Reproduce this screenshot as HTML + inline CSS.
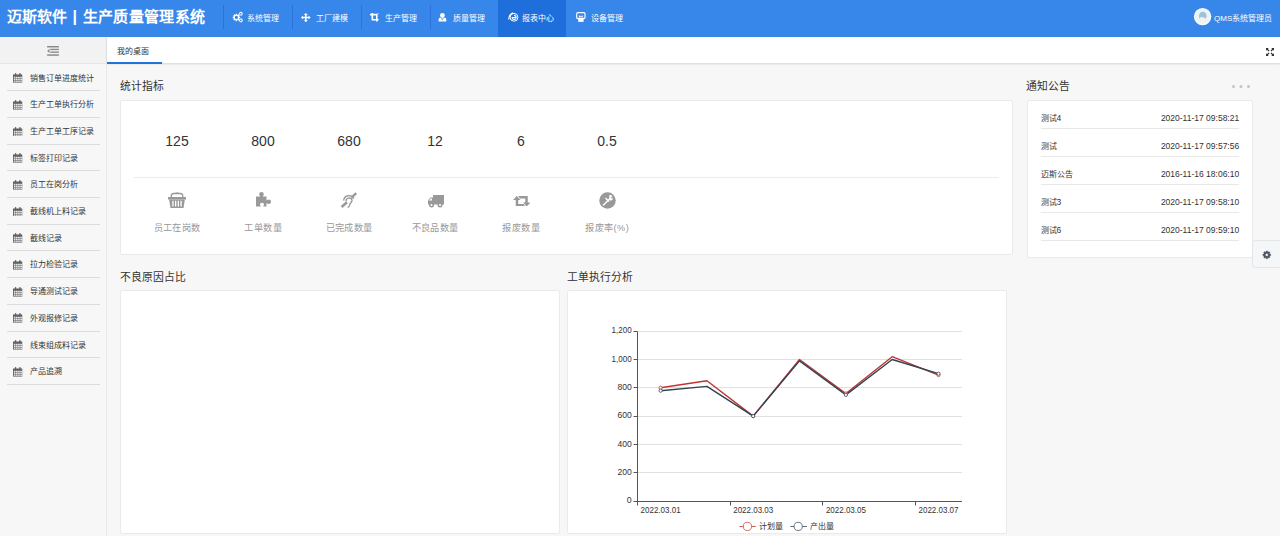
<!DOCTYPE html>
<html lang="zh-CN">
<head>
<meta charset="utf-8">
<style>
*{margin:0;padding:0;box-sizing:border-box}
html,body{width:1280px;height:536px;overflow:hidden;background:#f7f7f7;font-family:"Liberation Sans",sans-serif;color:#333}
.abs{position:absolute}
#hd{position:absolute;left:0;top:0;width:1280px;height:36.67px;background:#3786e9}
#logo{position:absolute;left:7px;top:6px;font-size:15px;font-weight:bold;color:#fff;line-height:22px;white-space:nowrap}
.sep{position:absolute;top:5.2px;width:1px;height:24.2px;background:#2a73dc}
.nav{position:absolute;top:0;height:37px;color:#fff;font-size:8px;line-height:37px;white-space:nowrap}
#act{position:absolute;left:498px;top:0;width:68px;height:37px;background:#1e6fdb}
#user{position:absolute;left:1194px;top:8px;width:17px;height:17px;border-radius:50%;background:#eef4fb}
#uname{position:absolute;left:1214px;top:-0.5px;line-height:37px;font-size:8px;color:#fff;white-space:nowrap}
#side{position:absolute;left:0;top:36.67px;width:106.67px;height:500px;background:#f7f7f7;border-right:1px solid #e8e8e8}
#tog{position:absolute;left:0;top:0;width:105.67px;height:27.3px;background:#f2f2f2;border-bottom:1px solid #e6e6e6}
.mi{position:absolute;left:7px;width:93px;height:26.67px;border-bottom:1px solid #dcdcdc}
.mi span{position:absolute;left:23px;top:1px;line-height:26px;font-size:8px;color:#333;white-space:nowrap}
.mi svg{position:absolute;left:6px;top:8.6px}
#tabs{position:absolute;left:106.67px;top:36.67px;width:1173.33px;height:26.4px;background:#fff;box-shadow:0 1px 2px rgba(0,0,0,.14)}
#tab1{position:absolute;left:0;top:0;width:55.3px;height:27px;border-bottom:2px solid #2272de}
#tab1 span{position:absolute;left:10px;top:2px;line-height:26px;font-size:8px;color:#333}
.ttl{position:absolute;font-size:10.8px;color:#333;white-space:nowrap;line-height:14px}
.card{position:absolute;background:#fff;border:1px solid #eaeaea;border-radius:2px}
.num{position:absolute;top:132.7px;width:86px;text-align:center;font-size:14px;color:#333;line-height:16px}
.lbl{position:absolute;top:221.8px;width:86px;text-align:center;font-size:9.2px;letter-spacing:0.45px;text-indent:0.45px;color:#999;line-height:13px;white-space:nowrap}
.ico{position:absolute}
.nrow{position:absolute;left:1040.6px;width:198.6px;height:28px;border-bottom:1px solid #e8e8e8;font-size:8.5px;color:#333}
.nrow .a{position:absolute;left:0;top:5px;line-height:25px;font-size:8px}
.nrow .b{position:absolute;right:0;top:5px;line-height:25px}
</style>
</head>
<body>
<svg width="0" height="0" style="position:absolute">
<defs>
<symbol id="cal" viewBox="0 0 10 10"><path d="M0 1.5h10V10H0z" fill="#5f5f5f"/><g fill="#ececec"><rect x="0.9" y="3.8" width="1.75" height="1.7"/><rect x="3.15" y="3.8" width="1.75" height="1.7"/><rect x="5.4" y="3.8" width="1.75" height="1.7"/><rect x="7.65" y="3.8" width="1.75" height="1.7"/><rect x="0.9" y="5.95" width="1.75" height="1.7"/><rect x="3.15" y="5.95" width="1.75" height="1.7"/><rect x="5.4" y="5.95" width="1.75" height="1.7"/><rect x="7.65" y="5.95" width="1.75" height="1.7"/><rect x="0.9" y="8.1" width="1.75" height="1.1"/><rect x="3.15" y="8.1" width="1.75" height="1.1"/><rect x="5.4" y="8.1" width="1.75" height="1.1"/><rect x="7.65" y="8.1" width="1.75" height="1.1"/></g><g fill="#5f5f5f"><rect x="2" y="0" width="1.4" height="2.8"/><rect x="6.6" y="0" width="1.4" height="2.8"/></g></symbol>
</defs></svg>
<div id="hd">
  <div id="logo"><span style="position:absolute;left:0;top:0">迈斯软件</span><span style="position:absolute;left:65.5px;top:0;font-size:16px">|</span><span style="position:absolute;left:75.5px;top:0;letter-spacing:0.4px">生产质量管理系统</span></div>
  <div class="sep" style="left:223px"></div>
  <div class="sep" style="left:292px"></div>
  <div class="sep" style="left:361px"></div>
  <div class="sep" style="left:430px"></div>
  <div id="act"></div>
  <svg class="abs" style="left:228px;top:8px" width="20" height="20" viewBox="228 8 20 20"><path fill="#fff" fill-rule="evenodd" d="M239.08 16.60 L240.13 16.66 L240.13 18.14 L239.08 18.20 L238.86 18.73 L239.56 19.51 L238.51 20.56 L237.73 19.86 L237.20 20.08 L237.14 21.13 L235.66 21.13 L235.60 20.08 L235.07 19.86 L234.29 20.56 L233.24 19.51 L233.94 18.73 L233.72 18.20 L232.67 18.14 L232.67 16.66 L233.72 16.60 L233.94 16.07 L233.24 15.29 L234.29 14.24 L235.07 14.94 L235.60 14.72 L235.66 13.67 L237.14 13.67 L237.20 14.72 L237.73 14.94 L238.51 14.24 L239.56 15.29 L238.86 16.07Z M238.00 17.40 A1.6 1.6 0 1 0 234.80 17.40 A1.6 1.6 0 1 0 238.00 17.40Z M242.29 13.23 L242.93 13.26 L242.93 14.34 L242.29 14.37 L242.09 14.72 L242.38 15.28 L241.44 15.83 L241.10 15.29 L240.70 15.29 L240.36 15.83 L239.42 15.28 L239.71 14.72 L239.51 14.37 L238.87 14.34 L238.87 13.26 L239.51 13.23 L239.71 12.88 L239.42 12.32 L240.36 11.77 L240.70 12.31 L241.10 12.31 L241.44 11.77 L242.38 12.32 L242.09 12.88Z M241.75 13.80 A0.85 0.85 0 1 0 240.05 13.80 A0.85 0.85 0 1 0 241.75 13.80Z M242.29 19.83 L242.93 19.86 L242.93 20.94 L242.29 20.97 L242.09 21.32 L242.38 21.88 L241.44 22.43 L241.10 21.89 L240.70 21.89 L240.36 22.43 L239.42 21.88 L239.71 21.32 L239.51 20.97 L238.87 20.94 L238.87 19.86 L239.51 19.83 L239.71 19.48 L239.42 18.92 L240.36 18.37 L240.70 18.91 L241.10 18.91 L241.44 18.37 L242.38 18.92 L242.09 19.48Z M241.75 20.40 A0.85 0.85 0 1 0 240.05 20.40 A0.85 0.85 0 1 0 241.75 20.40Z"/></svg>
  <span class="nav" style="left:247px">系统管理</span>
  <svg class="abs" style="left:301.2px;top:12.8px" width="9.6" height="9.2" viewBox="0 0 20 19.2"><g fill="#fff"><path d="M10 0l4.2 4.2h-2.6v3.8h4.2V5.4L20 9.6l-4.2 4.2v-2.6h-4.2V15h2.6L10 19.2 5.8 15h2.6v-3.8H4.2v2.6L0 9.6l4.2-4.2v2.6h4.2V4.2H5.8z"/></g></svg>
  <span class="nav" style="left:316px">工厂建模</span>
  <svg class="abs" style="left:370.2px;top:13.1px" width="8.6" height="8.6" viewBox="0 0 17 17"><g fill="#fff"><path d="M3 0h3.2v11.8H17V15H3z"/><path d="M0 1.6h15v15.4h-3.2V4.8H0z"/></g><path d="M13.4 3.6L16.8 0.2" stroke="#fff" stroke-width="1.6"/></svg>
  <span class="nav" style="left:384.5px">生产管理</span>
  <svg class="abs" style="left:432px;top:8px" width="20" height="18" viewBox="432 8 20 18"><g fill="#fff"><circle cx="442.4" cy="15.3" r="2.4"/><path d="M438.6 21.6v-1.8c0-1.6 1-2.4 2.2-2.4h3.2c1.3 0 2.3.8 2.3 2.4v1.8z"/></g><path d="M441.3 17.6l1.1 2.6 1.1-2.6" fill="none" stroke="#3786e9" stroke-width=".6"/></svg>
  <span class="nav" style="left:453px">质量管理</span>
  <svg class="abs" style="left:503px;top:8px" width="20" height="18" viewBox="503 8 20 18"><g fill="none" stroke="#fff"><circle cx="514" cy="17.3" r="3.9" stroke-width="1"/><path d="M511.8 17.6h4.4c0-1.4-1-2.2-2.2-2.2" stroke-width="1.1"/><path d="M512 17.6c.2 1.3 1 1.9 2.1 1.9.8 0 1.5-.4 1.9-1" stroke-width="1.1"/><path d="M513 12.9c-2.6 1.2-4.4 4-4.2 6.6" stroke-width="1.2"/></g></svg>
  <span class="nav" style="left:522px">报表中心</span>
  <svg class="abs" style="left:571px;top:8px" width="20" height="18" viewBox="571 8 20 18"><rect x="576.7" y="12.6" width="8.3" height="6" rx="1.2" fill="none" stroke="#fff" stroke-width="1.2"/><g fill="#fff"><rect x="578.2" y="17.6" width="5.4" height="4.3"/><circle cx="579.5" cy="16.3" r=".7"/><circle cx="582.2" cy="16.3" r=".7"/><rect x="579.5" y="15.9" width="2.7" height=".8"/></g></svg>
  <span class="nav" style="left:591px">设备管理</span>
  <svg class="abs" style="left:1188px;top:4px" width="30" height="26" viewBox="1188 4 30 26"><circle cx="1202.6" cy="16.6" r="8.7" fill="#fdfeff"/><circle cx="1202.6" cy="16.6" r="7.4" fill="#e9f3fb"/><path d="M1200.3 17.8h4.8l-2.4 5.2z" fill="#fbf1e8"/><path d="M1199 16c0-2.6 1.6-4.3 3.8-4.3s3.7 1.7 3.7 4.2c0 1.3-.5 2.2-1.2 2.6-1.3-.9-3-1.5-4.6-1.4l-1 1.6c-.5-.7-.7-1.6-.7-2.7z" fill="#9ec2da"/></svg>
  <div id="uname">QMS系统管理员</div>
</div>

<div id="side">
  <div id="tog"><svg class="abs" style="left:47px;top:9.2px" width="12" height="9.8" viewBox="0 0 12 10"><g fill="#8a8a8a"><rect x="0" y="0" width="12" height="1.5"/><rect x="3.2" y="2.8" width="8.8" height="1.4"/><rect x="3.2" y="5.6" width="8.8" height="1.4"/><rect x="0" y="8.5" width="12" height="1.5"/><path d="M2.4 2.9v4.2L0 5z"/></g></svg></div>
  <div class="mi" style="top:27.90px"><svg width="9.5" height="9.8"><use href="#cal"/></svg><span>销售订单进度统计</span></div>
  <div class="mi" style="top:54.60px"><svg width="9.5" height="9.8"><use href="#cal"/></svg><span>生产工单执行分析</span></div>
  <div class="mi" style="top:81.30px"><svg width="9.5" height="9.8"><use href="#cal"/></svg><span>生产工单工序记录</span></div>
  <div class="mi" style="top:108.00px"><svg width="9.5" height="9.8"><use href="#cal"/></svg><span>标签打印记录</span></div>
  <div class="mi" style="top:134.70px"><svg width="9.5" height="9.8"><use href="#cal"/></svg><span>员工在岗分析</span></div>
  <div class="mi" style="top:161.40px"><svg width="9.5" height="9.8"><use href="#cal"/></svg><span>截线机上料记录</span></div>
  <div class="mi" style="top:188.10px"><svg width="9.5" height="9.8"><use href="#cal"/></svg><span>截线记录</span></div>
  <div class="mi" style="top:214.80px"><svg width="9.5" height="9.8"><use href="#cal"/></svg><span>拉力检验记录</span></div>
  <div class="mi" style="top:241.50px"><svg width="9.5" height="9.8"><use href="#cal"/></svg><span>导通测试记录</span></div>
  <div class="mi" style="top:268.20px"><svg width="9.5" height="9.8"><use href="#cal"/></svg><span>外观报修记录</span></div>
  <div class="mi" style="top:294.90px"><svg width="9.5" height="9.8"><use href="#cal"/></svg><span>线束组成料记录</span></div>
  <div class="mi" style="top:321.60px"><svg width="9.5" height="9.8"><use href="#cal"/></svg><span>产品追溯</span></div>
</div>

<div id="tabs">
  <div id="tab1"><span>我的桌面</span></div>
</div>

<div class="ttl" style="left:120px;top:79px">统计指标</div>
<div class="card" style="left:120.3px;top:100px;width:892.7px;height:154.6px"></div>
<div class="abs" style="left:134px;top:177px;width:865px;height:1px;background:#ececec"></div>

<div class="ttl" style="left:1026px;top:79px">通知公告</div>
<div class="card" style="left:1026.7px;top:100.3px;width:226.3px;height:157.7px"></div>

<div class="ttl" style="left:120px;top:269.5px">不良原因占比</div>
<div class="card" style="left:120.3px;top:290.3px;width:439.4px;height:244.2px"></div>
<div class="ttl" style="left:567px;top:269.5px">工单执行分析</div>
<div class="card" style="left:567.3px;top:290.3px;width:439.4px;height:244.2px"></div>

<div class="num" style="left:134px">125</div>
<div class="lbl" style="left:134px">员工在岗数</div>
<div class="num" style="left:220px">800</div>
<div class="lbl" style="left:220px">工单数量</div>
<div class="num" style="left:306px">680</div>
<div class="lbl" style="left:306px">已完成数量</div>
<div class="num" style="left:392px">12</div>
<div class="lbl" style="left:392px">不良品数量</div>
<div class="num" style="left:478px">6</div>
<div class="lbl" style="left:478px">报废数量</div>
<div class="num" style="left:564px">0.5</div>
<div class="lbl" style="left:564px">报废率(%)</div>
<svg class="ico" style="left:168px;top:192px" width="18" height="16.5" viewBox="0 0 36 33"><g fill="none" stroke="#999" stroke-width="2.6"><path d="M6.5 11.5V7.5C6.5 4.5 8.5 3 11.5 3h13c3 0 5 1.5 5 4.5v4"/></g><g fill="#999"><rect x="15" y="0.8" width="6" height="3.2" rx="1"/><path d="M0 10h36v5H0z"/><path d="M2.2 15h31.6L31 32H5z"/></g><g fill="#fff"><rect x="8.6" y="17.5" width="2.6" height="11.5"/><rect x="14" y="17.5" width="2.6" height="11.5"/><rect x="19.4" y="17.5" width="2.6" height="11.5"/><rect x="24.8" y="17.5" width="2.6" height="11.5"/></g></svg>
<svg class="ico" style="left:255.5px;top:192px" width="15" height="14.5" viewBox="0 0 30 29"><path fill="#999" d="M0 9h8.5C7 7 6.5 5.5 6.5 4.5 6.5 1.8 8.5 0 11 0s4.5 1.8 4.5 4.5c0 1-.5 2.5-2 4.5H21v8c2-1.5 3.5-2 4.5-2 2.7 0 4.5 2 4.5 4.5S28.2 24 25.5 24c-1 0-2.5-.5-4.5-2v7h-7c1.5-2 2-3 2-4 0-2-1.8-3.5-4-3.5S8 23 8 25c0 1 .5 2 2 4H0z"/></svg>
<svg class="ico" style="left:338px;top:190px" width="22" height="20" viewBox="338 190 22 20"><g fill="none" stroke="#999"><path stroke-width="2.3" d="M351.6 197.6L356.2 193.1"/><path stroke-width="2.5" d="M341.6 207L347 202.2"/><path stroke-width="1.3" d="M343.6 200.6A5.4 5.4 0 0 1 353.8 198.6"/><path stroke-width="1.3" d="M346 201.4A3.1 3.1 0 0 1 352.1 200.4C352 202.3 349.8 203.2 349.6 205.2 349.4 206.6 348.6 207.3 347.6 207.4"/></g></svg>
<svg class="ico" style="left:427.5px;top:194.5px" width="16" height="13" viewBox="0 0 32 26"><g fill="#999"><path d="M10 0h22v19H10z"/><path d="M0 11l4.5-6H10v14H0z"/><circle cx="7" cy="20" r="5"/><circle cx="24" cy="20" r="5"/></g><g fill="#fff"><circle cx="7" cy="20" r="2"/><circle cx="24" cy="20" r="2"/><path d="M2 11l3-4h3v4z"/></g></svg>
<svg class="ico" style="left:512.5px;top:195.5px" width="17.5" height="10.5" viewBox="0 0 35 21"><g fill="#999"><path d="M7.5 0L15 8h-4.5v8H21l4 5H5.5V8H0z"/><path d="M27.5 21L20 13h4.5V5H14l-4-5h19.5v13H35z"/></g></svg>
<svg class="ico" style="left:598.5px;top:192px" width="17" height="17" viewBox="0 0 34 34"><circle cx="17" cy="17" r="16.5" fill="#999"/><g fill="none" stroke="#fff" stroke-width="3" stroke-linecap="round"><path d="M9 26l9-9"/><path d="M18 17l5-5"/></g><path fill="#fff" d="M20.5 6.5c2.5-1 5.5.5 6.5 3l-3 1.5.5 2 2 .5 1.5-3c1 3-1 6-3.5 6.5-1.5.3-2.5 0-3.5-.5z"/><path fill="#fff" d="M12 11l3 1 6 6-2 2-6-6z"/></svg>
<div class="nrow" style="top:100.5px"><span class="a">测试<span style="font-size:8.5px">4</span></span><span class="b">2020-11-17 09:58:21</span></div>
<div class="nrow" style="top:128.5px"><span class="a">测试</span><span class="b">2020-11-17 09:57:56</span></div>
<div class="nrow" style="top:156.5px"><span class="a">迈斯公告</span><span class="b">2016-11-16 18:06:10</span></div>
<div class="nrow" style="top:184.5px"><span class="a">测试<span style="font-size:8.5px">3</span></span><span class="b">2020-11-17 09:58:10</span></div>
<div class="nrow" style="top:212.5px"><span class="a">测试<span style="font-size:8.5px">6</span></span><span class="b">2020-11-17 09:59:10</span></div>
<svg class="abs" style="left:1231px;top:84px" width="20" height="5"><g fill="#c4c4c4"><circle cx="2.5" cy="2.5" r="1.5"/><circle cx="10" cy="2.5" r="1.5"/><circle cx="17.5" cy="2.5" r="1.5"/></g></svg>
<div class="abs" style="left:1251.8px;top:240.3px;width:30px;height:27.7px;background:#f4f6f7;border:1px solid #e3e6e8;border-radius:3px 0 0 3px"></div>
<svg class="abs" style="left:1258px;top:246px" width="18" height="18" viewBox="1258 246 18 18"><path fill="#47525c" fill-rule="evenodd" stroke="#47525c" stroke-width=".3" stroke-linejoin="round" d="M1269.67 254.04 L1270.72 254.12 L1270.72 255.68 L1269.67 255.76 L1269.44 256.32 L1270.13 257.12 L1269.02 258.23 L1268.22 257.54 L1267.66 257.77 L1267.58 258.82 L1266.02 258.82 L1265.94 257.77 L1265.38 257.54 L1264.58 258.23 L1263.47 257.12 L1264.16 256.32 L1263.93 255.76 L1262.88 255.68 L1262.88 254.12 L1263.93 254.04 L1264.16 253.48 L1263.47 252.68 L1264.58 251.57 L1265.38 252.26 L1265.94 252.03 L1266.02 250.98 L1267.58 250.98 L1267.66 252.03 L1268.22 252.26 L1269.02 251.57 L1270.13 252.68 L1269.44 253.48Z M1268.25 254.90 A1.45 1.45 0 1 0 1265.35 254.90 A1.45 1.45 0 1 0 1268.25 254.90Z"/></svg>
<svg class="abs" style="left:1266px;top:47.5px" width="8" height="8" viewBox="0 0 16 16"><g fill="#333"><path d="M0 0h5.5L0 5.5z"/><path d="M16 0v5.5L10.5 0z"/><path d="M0 16v-5.5L5.5 16z"/><path d="M16 16h-5.5L16 10.5z"/></g><g stroke="#333" stroke-width="2.4"><path d="M2 2l4.2 4.2M14 2L9.8 6.2M2 14l4.2-4.2M14 14L9.8 9.8"/></g></svg>
<svg class="abs" style="left:567px;top:290px" width="440" height="246" viewBox="567 290 440 246">
<path d="M638 472.5H962" stroke="#e0e0e0" stroke-width="1"/>
<path d="M638 444.5H962" stroke="#e0e0e0" stroke-width="1"/>
<path d="M638 416.5H962" stroke="#e0e0e0" stroke-width="1"/>
<path d="M638 387.5H962" stroke="#e0e0e0" stroke-width="1"/>
<path d="M638 359.5H962" stroke="#e0e0e0" stroke-width="1"/>
<path d="M638 331.5H962" stroke="#e0e0e0" stroke-width="1"/>
<path d="M637.5 331.5V501.5" stroke="#555" stroke-width="1"/>
<path d="M637 501.5H962" stroke="#555" stroke-width="1"/>
<path d="M633.5 501.5H637.5" stroke="#555" stroke-width="1"/>
<path d="M633.5 472.5H637.5" stroke="#555" stroke-width="1"/>
<path d="M633.5 444.5H637.5" stroke="#555" stroke-width="1"/>
<path d="M633.5 416.5H637.5" stroke="#555" stroke-width="1"/>
<path d="M633.5 387.5H637.5" stroke="#555" stroke-width="1"/>
<path d="M633.5 359.5H637.5" stroke="#555" stroke-width="1"/>
<path d="M633.5 331.5H637.5" stroke="#555" stroke-width="1"/>
<path d="M637.5 501.5V505.5" stroke="#555" stroke-width="1"/>
<path d="M730.5 501.5V505.5" stroke="#555" stroke-width="1"/>
<path d="M822.5 501.5V505.5" stroke="#555" stroke-width="1"/>
<path d="M915.5 501.5V505.5" stroke="#555" stroke-width="1"/>
<text x="631.7" y="503.2" text-anchor="end" font-size="9" fill="#333" textLength="4.9" lengthAdjust="spacingAndGlyphs">0</text>
<text x="631.7" y="474.9" text-anchor="end" font-size="9" fill="#333" textLength="14.3" lengthAdjust="spacingAndGlyphs">200</text>
<text x="631.7" y="446.6" text-anchor="end" font-size="9" fill="#333" textLength="14.3" lengthAdjust="spacingAndGlyphs">400</text>
<text x="631.7" y="418.2" text-anchor="end" font-size="9" fill="#333" textLength="14.3" lengthAdjust="spacingAndGlyphs">600</text>
<text x="631.7" y="389.9" text-anchor="end" font-size="9" fill="#333" textLength="14.3" lengthAdjust="spacingAndGlyphs">800</text>
<text x="631.7" y="361.6" text-anchor="end" font-size="9" fill="#333" textLength="20.1" lengthAdjust="spacingAndGlyphs">1,000</text>
<text x="631.7" y="333.3" text-anchor="end" font-size="9" fill="#333" textLength="20.1" lengthAdjust="spacingAndGlyphs">1,200</text>
<text x="660.6" y="513.2" text-anchor="middle" font-size="9" fill="#333" textLength="40" lengthAdjust="spacingAndGlyphs">2022.03.01</text>
<text x="753.2" y="513.2" text-anchor="middle" font-size="9" fill="#333" textLength="40" lengthAdjust="spacingAndGlyphs">2022.03.03</text>
<text x="845.9" y="513.2" text-anchor="middle" font-size="9" fill="#333" textLength="40" lengthAdjust="spacingAndGlyphs">2022.03.05</text>
<text x="938.5" y="513.2" text-anchor="middle" font-size="9" fill="#333" textLength="40" lengthAdjust="spacingAndGlyphs">2022.03.07</text>
<polyline points="660.6,387.8 706.9,380.7 753.2,416.1 799.5,359.5 845.9,393.5 892.2,356.7 938.5,375.1" fill="none" stroke="#c23531" stroke-width="1.4" stroke-linejoin="round"/>
<polyline points="660.6,390.7 706.9,386.4 753.2,416.1 799.5,360.9 845.9,394.9 892.2,359.5 938.5,373.7" fill="none" stroke="#2f4554" stroke-width="1.4" stroke-linejoin="round"/>
<circle cx="660.6" cy="387.8" r="1.6" fill="#fff" stroke="#c23531" stroke-width="0.8"/>
<circle cx="753.2" cy="416.1" r="1.6" fill="#fff" stroke="#c23531" stroke-width="0.8"/>
<circle cx="845.9" cy="393.5" r="1.6" fill="#fff" stroke="#c23531" stroke-width="0.8"/>
<circle cx="938.5" cy="375.1" r="1.6" fill="#fff" stroke="#c23531" stroke-width="0.8"/>
<circle cx="660.6" cy="390.7" r="1.6" fill="#fff" stroke="#2f4554" stroke-width="0.8"/>
<circle cx="753.2" cy="416.1" r="1.6" fill="#fff" stroke="#2f4554" stroke-width="0.8"/>
<circle cx="845.9" cy="394.9" r="1.6" fill="#fff" stroke="#2f4554" stroke-width="0.8"/>
<circle cx="938.5" cy="373.7" r="1.6" fill="#fff" stroke="#2f4554" stroke-width="0.8"/>
<g opacity=".8"><path d="M739.4 526.5H755.8" stroke="#c23531" stroke-width="1"/><circle cx="747.4" cy="526.4" r="4.1" fill="#fff" stroke="#c23531" stroke-width=".9"/></g>
<text x="759.2" y="529.3" font-size="8" fill="#333">计划量</text>
<g opacity=".8"><path d="M790.5 526.5H806.9" stroke="#2f4554" stroke-width="1"/><circle cx="798.2" cy="526.4" r="4.1" fill="#fff" stroke="#2f4554" stroke-width=".9"/></g>
<text x="809.8" y="529.3" font-size="8" fill="#333">产出量</text>
</svg>
</body>
</html>
